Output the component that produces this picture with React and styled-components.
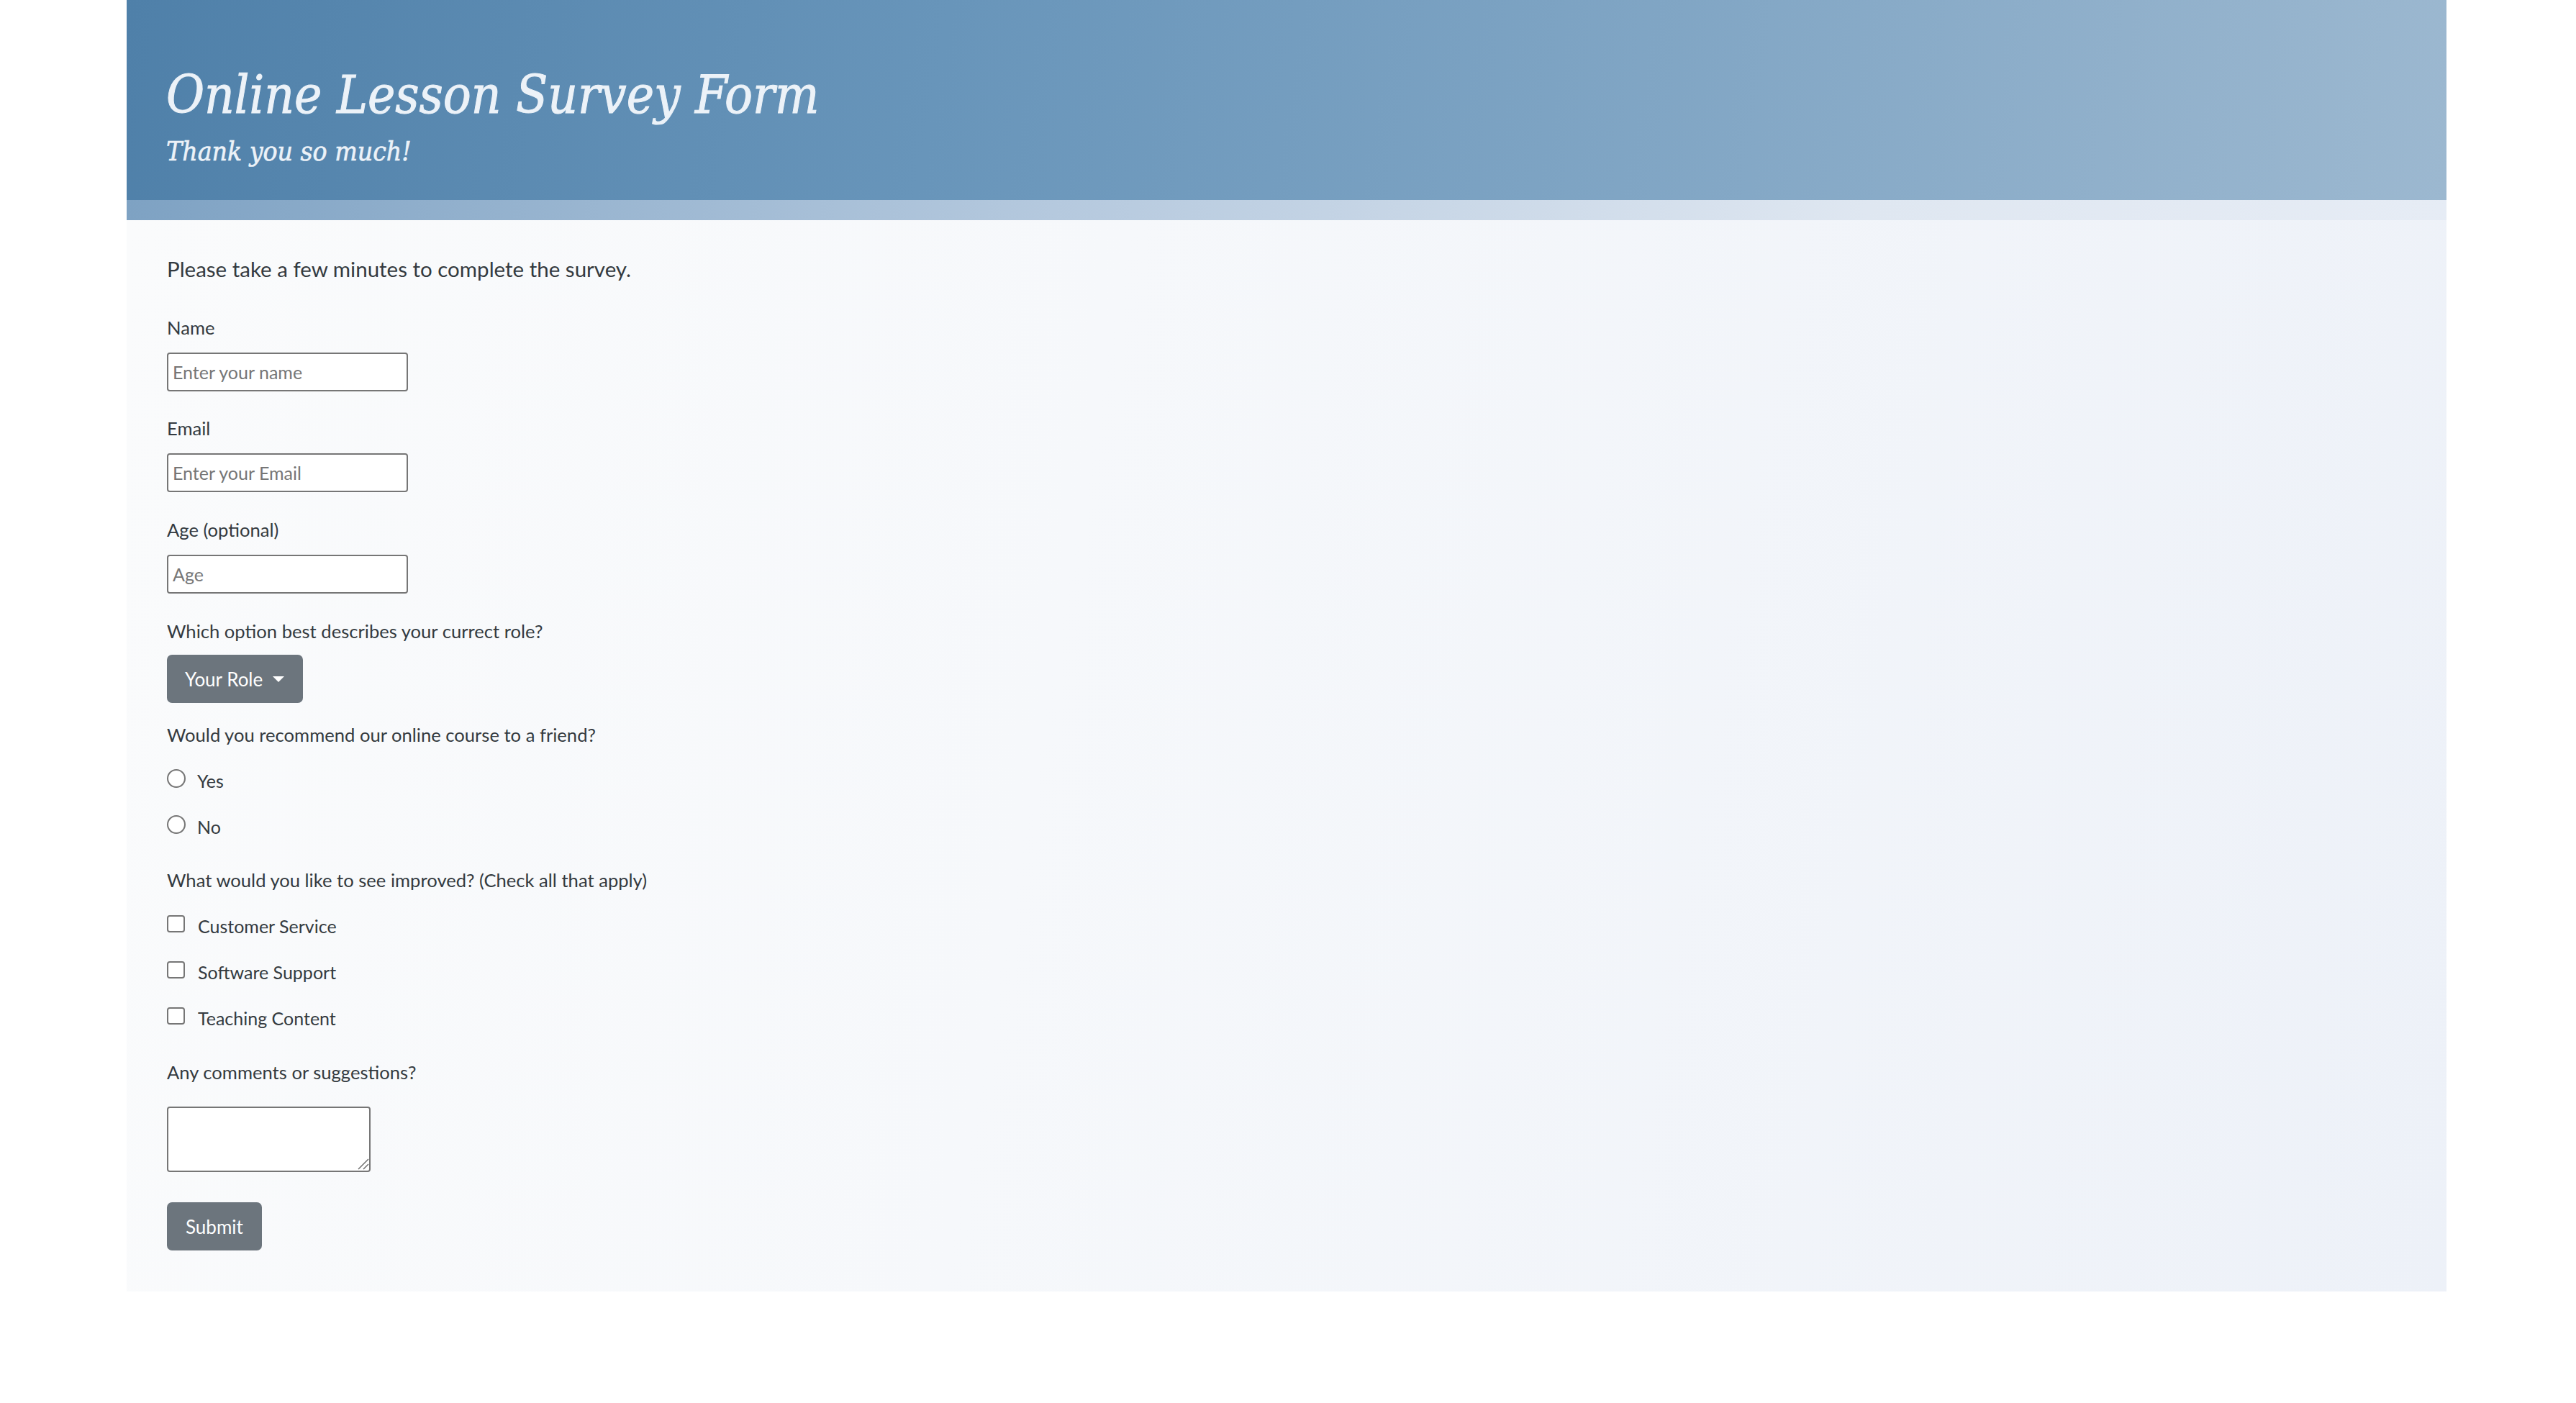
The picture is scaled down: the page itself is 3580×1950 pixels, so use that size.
import React from "react";
import styled, { createGlobalStyle } from "styled-components";

const Global = createGlobalStyle`
  html, body { margin: 0; padding: 0; background: #ffffff; }
  body { font-family: Lato, "Noto Sans", sans-serif; color: #343a40; }
  * { box-sizing: border-box; }
`;

const Page = styled.main`
  width: 3224px;
  margin-left: 176px;
`;

const Header = styled.header`
  height: 278px;
  padding: 89px 0 0 55px;
  background: linear-gradient(100deg, #4f80a9 0%, #6895ba 35%, #9cb8d0 100%);
  color: #ecf2f8;
`;

const Title = styled.h1`
  margin: 0;
  font-family: "DejaVu Serif Condensed", "DejaVu Serif", "Liberation Serif", serif;
  font-stretch: condensed;
  font-style: italic;
  font-weight: 400;
  font-size: 72px;
  line-height: 86px;
  -webkit-text-stroke: 1px #ecf2f8;
`;

const Subtitle = styled.p`
  margin: 13px 0 0;
  font-family: "DejaVu Serif Condensed", "DejaVu Serif", "Liberation Serif", serif;
  font-stretch: condensed;
  font-style: italic;
  font-size: 37px;
  line-height: 46px;
  -webkit-text-stroke: 0.6px #ecf2f8;
`;

const Band = styled.div`
  height: 28px;
  background: linear-gradient(90deg, #7ea2c3 0%, #b5c9de 40%, #dfe7f1 75%, #e6ecf5 100%);
`;

const Content = styled.section`
  padding: 48px 0 57px 56px;
  background: linear-gradient(100deg, #fafbfc 0%, #f6f8fb 40%, #edf1f8 100%);
`;

const Intro = styled.p`
  margin: 0 0 43px;
  font-size: 29.5px;
  line-height: 40px;
  color: #343a40;
`;

const Group = styled.div`
  margin-bottom: ${(p) => p.$gap ?? 34}px;
`;

const Label = styled.label`
  display: block;
  font-size: 25.6px;
  line-height: 36px;
  color: #343a40;
  margin-bottom: ${(p) => p.$space ?? 17}px;
`;

const TextInput = styled.input`
  display: block;
  width: 335px;
  height: 54px;
  padding: 0 6px;
  border: 2px solid #767676;
  border-radius: 4px;
  background: #ffffff;
  font-family: Lato, "Noto Sans", sans-serif;
  font-size: 25px;
  color: #333;
  &::placeholder { color: #767676; }
`;

const Toggle = styled.button`
  display: inline-flex;
  align-items: center;
  height: 67px;
  padding: 0 26px 0 25px;
  border: none;
  border-radius: 7px;
  background: #6c757d;
  color: #ffffff;
  font-family: Lato, "Noto Sans", sans-serif;
  font-size: 26px;
  &::after {
    content: "";
    margin-left: 14px;
    border-top: 8px solid #ffffff;
    border-left: 8px solid transparent;
    border-right: 8px solid transparent;
  }
`;

const Options = styled.div`
  display: flex;
  flex-direction: column;
  gap: 28px;
  margin-top: 28px;
`;

const Choice = styled.label`
  display: flex;
  align-items: flex-start;
  gap: ${(p) => p.$gap}px;
  height: 36px;
  font-size: 25px;
  line-height: 36px;
  color: #343a40;
`;

const Mark = styled.input`
  appearance: none;
  margin: ${(p) => (p.type === "radio" ? 2 : 3)}px 0 0;
  width: ${(p) => (p.type === "radio" ? 26 : 25)}px;
  height: ${(p) => (p.type === "radio" ? 26 : 24)}px;
  border: 2px solid #767676;
  border-radius: ${(p) => (p.type === "radio" ? "50%" : "4px")};
  background: #ffffff;
  flex: none;
`;

const AreaWrap = styled.div`
  position: relative;
  width: 283px;
  height: 91px;
  margin-top: 30px;
`;

const Area = styled.textarea`
  display: block;
  width: 100%;
  height: 100%;
  border: 2px solid #767676;
  border-radius: 4px;
  background: #ffffff;
  resize: none;
`;

const Grip = styled.svg`
  position: absolute;
  right: 2px;
  bottom: 3px;
  width: 16px;
  height: 16px;
`;

const Submit = styled.button`
  display: block;
  height: 67px;
  padding: 0 26px;
  border: none;
  border-radius: 7px;
  background: #6c757d;
  color: #ffffff;
  font-family: Lato, "Noto Sans", sans-serif;
  font-size: 26px;
`;

const fields = [
  { id: "name", label: "Name", placeholder: "Enter your name", type: "text", gap: 33 },
  { id: "email", label: "Email", placeholder: "Enter your Email", type: "email", gap: 34 },
  { id: "age", label: "Age (optional)", placeholder: "Age", type: "number", gap: 34 },
];

const improvements = ["Customer Service", "Software Support", "Teaching Content"];

export default function App() {
  return (
    <>
      <Global />
      <Page>
        <Header>
          <Title>Online Lesson Survey Form</Title>
          <Subtitle>Thank you so much!</Subtitle>
        </Header>
        <Band />
        <Content>
          <Intro>Please take a few minutes to complete the survey.</Intro>
          {fields.map((f) => (
            <Group key={f.id} $gap={f.gap}>
              <Label htmlFor={f.id}>{f.label}</Label>
              <TextInput id={f.id} type={f.type} placeholder={f.placeholder} />
            </Group>
          ))}
          <Group $gap={26}>
            <Label $space={15}>Which option best describes your currect role?</Label>
            <Toggle type="button">Your Role</Toggle>
          </Group>
          <Group $gap={38}>
            <Label $space={0}>Would you recommend our online course to a friend?</Label>
            <Options>
              <Choice $gap={16}>
                <Mark type="radio" name="rec" />
                Yes
              </Choice>
              <Choice $gap={16}>
                <Mark type="radio" name="rec" />
                No
              </Choice>
            </Options>
          </Group>
          <Group $gap={39}>
            <Label $space={0}>What would you like to see improved? (Check all that apply)</Label>
            <Options>
              {improvements.map((t) => (
                <Choice key={t} $gap={18}>
                  <Mark type="checkbox" />
                  {t}
                </Choice>
              ))}
            </Options>
          </Group>
          <Group $gap={42}>
            <Label $space={0}>Any comments or suggestions?</Label>
            <AreaWrap>
              <Area />
              <Grip viewBox="0 0 16 16">
                <line x1="1" y1="15" x2="15" y2="1" stroke="#6b6b6b" strokeWidth="1.4" />
                <line x1="8" y1="15" x2="15" y2="8" stroke="#6b6b6b" strokeWidth="1.4" />
              </Grip>
            </AreaWrap>
          </Group>
          <Submit type="submit">Submit</Submit>
        </Content>
      </Page>
    </>
  );
}
